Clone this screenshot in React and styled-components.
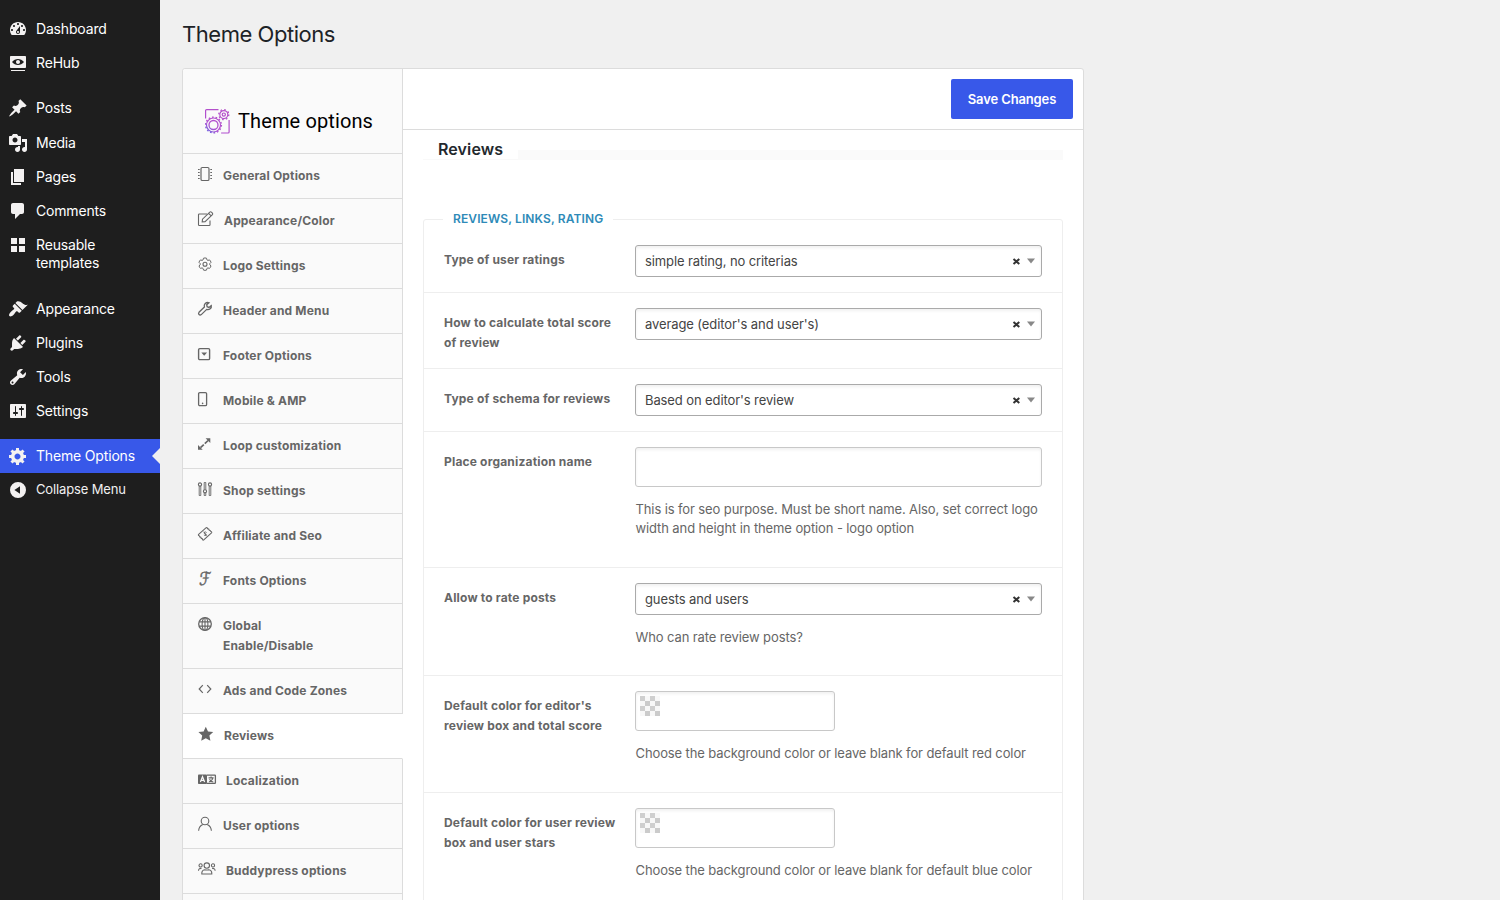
import React from 'react'
import styled, { createGlobalStyle, css } from 'styled-components'

const GlobalStyle = createGlobalStyle`
  *, *::before, *::after {
    box-sizing: border-box;
  }
  body {
    margin: 0;
    background: #f0f0f0;
    font-family: Inter, 'Liberation Sans', sans-serif;
    color: #3c434a;
  }
`

const Page = styled.div`
  display: flex;
  height: 100vh;
  overflow: hidden;
`

/* ---------- admin menu ---------- */

const AdminMenu = styled.nav`
  flex: 0 0 160px;
  padding-top: 12px;
  background: #1e1e1e;
`

const MenuGroup = styled.div`
  margin-bottom: 11px;
`

const MenuItem = styled.a`
  position: relative;
  display: flex;
  align-items: flex-start;
  padding: 8px 20px 8px 8px;
  font-size: 14px;
  line-height: 18.2px;
  letter-spacing: -0.17px;
  color: #fff;
  ${(p) => p.$active && css`
    height: 33.6px;
    background: #3858e9;
    &::after {
      content: '';
      position: absolute;
      right: 0;
      top: 9px;
      border: 8px solid transparent;
      border-right-color: #f0f0f0;
    }
  `}
  ${(p) => p.$collapse && css`
    font-size: 13px;
    line-height: 17px;
    letter-spacing: -0.14px;
    color: #f0f0f1;
  `}
`

const MenuIcon = styled.svg`
  flex: none;
  width: 20px;
  height: 20px;
  margin: -1px 8px -1px 0;
  fill: #f3f1f1;
`

const icons = {
  dashboard: 'M3.76 16h12.48c1.1-1.37 1.76-3.11 1.76-5 0-4.42-3.58-8-8-8s-8 3.58-8 8c0 1.89.66 3.63 1.76 5zM10 4c.55 0 1 .45 1 1s-.45 1-1 1-1-.45-1-1 .45-1 1-1zM6 6c.55 0 1 .45 1 1s-.45 1-1 1-1-.45-1-1 .45-1 1-1zm8 0c.55 0 1 .45 1 1s-.45 1-1 1-1-.45-1-1 .45-1 1-1zm-5.37 5.55L12 7v6c0 1.1-.9 2-2 2s-2-.9-2-2c0-.57.24-1.08.63-1.45zM4 10c.55 0 1 .45 1 1s-.45 1-1 1-1-.45-1-1 .45-1 1-1zm12 0c.55 0 1 .45 1 1s-.45 1-1 1-1-.45-1-1 .45-1 1-1zm-5 3c0-.55-.45-1-1-1s-1 .45-1 1 .45 1 1 1 1-.45 1-1z',
  rehub: 'M18 14V4c0-.55-.45-1-1-1H3c-.55 0-1 .45-1 1v10c0 .55.45 1 1 1h14c.55 0 1-.45 1-1zm-8-8c2.3 0 4.4 1.14 6 3-1.6 1.86-3.7 3-6 3s-4.4-1.14-6-3c1.6-1.86 3.7-3 6-3zm2 3c0-1.1-.9-2-2-2s-2 .9-2 2 .9 2 2 2 2-.9 2-2zM3 17h14v1H3z',
  posts: 'M10.44 3.02l1.82-1.82 6.36 6.35-1.83 1.82c-1.05-.68-2.48-.57-3.41.36l-.75.75c-.92.93-1.04 2.35-.35 3.41l-1.83 1.82-2.41-2.41-2.8 2.79c-.42.42-3.38 2.71-3.8 2.29s1.86-3.39 2.28-3.81l2.79-2.79L4.1 9.36l1.83-1.82c1.05.69 2.48.57 3.4-.36l.75-.75c.93-.92 1.05-2.35.36-3.41z',
  media: 'M13 11V4c0-.55-.45-1-1-1h-1.67L9 1H5L3.67 3H2c-.55 0-1 .45-1 1v7c0 .55.45 1 1 1h10c.55 0 1-.45 1-1zM7 4.5c1.38 0 2.5 1.12 2.5 2.5S8.38 9.5 7 9.5 4.5 8.38 4.5 7 5.62 4.5 7 4.5zM14 6h5v10.5c0 1.38-1.12 2.5-2.5 2.5S14 17.88 14 16.5s1.12-2.5 2.5-2.5c.17 0 .34.02.5.05V9h-3V6zm-4 8.05V13h2v3.5c0 1.38-1.12 2.5-2.5 2.5S7 17.88 7 16.5 8.12 14 9.5 14c.17 0 .34.02.5.05z',
  pages: 'M6 15V2h10v13H6zm-1 1h8v2H3V5h2v11z',
  comments: 'M5 2h9c1.1 0 2 .9 2 2v7c0 1.1-.9 2-2 2h-2l-5 5v-5H5c-1.1 0-2-.9-2-2V4c0-1.1.9-2 2-2z',
  blocks: 'M9 9V3H3v6h6zm8 0V3h-6v6h6zm-8 8v-6H3v6h6zm8 0v-6h-6v6h6z',
  appearance: 'M14.48 11.06L7.41 3.99l1.5-1.5c.5-.56 2.3-.47 3.51.32 1.21.8 1.43 1.28 2.91 2.1 1.18.64 2.45 1.26 4.45.85zm-.71.71L6.7 4.7 4.93 6.47c-.39.39-.39 1.02 0 1.41l1.06 1.06c.39.39.39 1.03 0 1.42-.6.6-1.43 1.11-2.21 1.69-.35.26-.7.53-1.01.84C1.43 14.23.4 16.08 1.4 17.07c.99 1 2.84-.03 4.18-1.36.31-.31.58-.66.85-1.02.57-.78 1.08-1.61 1.69-2.21.39-.39 1.02-.39 1.41 0l1.06 1.06c.39.39 1.02.39 1.41 0z',
  plugins: 'M13.11 4.36L9.87 7.6 8 5.73l3.24-3.24c.35-.34 1.05-.2 1.56.32.52.51.66 1.21.31 1.55zm-8 1.77l.91-1.12 9.01 9.01-1.19.84c-.71.71-2.63 1.16-3.82 1.16H6.14L4.9 17.26c-.59.59-1.54.59-2.12 0-.59-.58-.59-1.53 0-2.12l1.24-1.24v-3.88c0-1.13.4-3.19 1.09-3.89zm7.26 3.97l3.24-3.24c.34-.35 1.04-.21 1.55.31.52.51.66 1.21.31 1.55l-3.24 3.25z',
  tools: 'M16.68 9.77c-1.34 1.34-3.3 1.67-4.95.99l-5.41 6.52c-.99.99-2.59.99-3.58 0s-.99-2.59 0-3.57l6.52-5.42c-.68-1.65-.35-3.61.99-4.95 1.28-1.28 3.12-1.62 4.72-1.06l-2.89 2.89 2.82 2.82 2.86-2.87c.53 1.58.18 3.39-1.08 4.65zM3.81 16.21c.4.39 1.04.39 1.43 0 .4-.4.4-1.04 0-1.43-.39-.4-1.03-.4-1.43 0-.39.39-.39 1.03 0 1.43z',
  settings: 'M18 16V4c0-.55-.45-1-1-1H3c-.55 0-1 .45-1 1v12c0 .55.45 1 1 1h14c.55 0 1-.45 1-1zM8 11h1c.55 0 1 .45 1 1s-.45 1-1 1H8v1.5c0 .28-.22.5-.5.5s-.5-.22-.5-.5V13H6c-.55 0-1-.45-1-1s.45-1 1-1h1V5.5c0-.28.22-.5.5-.5s.5.22.5.5V11zm5-2h-1c-.55 0-1-.45-1-1s.45-1 1-1h1V5.5c0-.28.22-.5.5-.5s.5.22.5.5V7h1c.55 0 1 .45 1 1s-.45 1-1 1h-1v5.5c0 .28-.22.5-.5.5s-.5-.22-.5-.5V9z',
  generic: 'M18 12h-2.18c-.17.7-.44 1.35-.81 1.93l1.54 1.54-2.1 2.1-1.54-1.54c-.58.36-1.23.63-1.91.79V19H8v-2.18c-.68-.16-1.33-.43-1.91-.79l-1.54 1.54-2.12-2.12 1.54-1.54c-.36-.58-.63-1.23-.79-1.91H1V9.03h2.17c.16-.7.44-1.35.8-1.94L2.43 5.55l2.1-2.1 1.54 1.54c.58-.37 1.24-.64 1.93-.81V2h3v2.18c.68.16 1.33.43 1.91.79l1.54-1.54 2.12 2.12-1.54 1.54c.36.59.64 1.24.8 1.94H18V12zm-8.5 1.5c1.66 0 3-1.34 3-3s-1.34-3-3-3-3 1.34-3 3 1.34 3 3 3z',
  collapse: 'M10 2a8 8 0 1 0 0 16 8 8 0 0 0 0-16zM12 6.2v7.6L6.4 10z',
}

const menu = [
  [
    { icon: 'dashboard', label: 'Dashboard' },
    { icon: 'rehub', label: 'ReHub' },
  ],
  [
    { icon: 'posts', label: 'Posts' },
    { icon: 'media', label: 'Media' },
    { icon: 'pages', label: 'Pages' },
    { icon: 'comments', label: 'Comments' },
    { icon: 'blocks', label: 'Reusable templates' },
  ],
  [
    { icon: 'appearance', label: 'Appearance' },
    { icon: 'plugins', label: 'Plugins' },
    { icon: 'tools', label: 'Tools' },
    { icon: 'settings', label: 'Settings' },
  ],
  [
    { icon: 'generic', label: 'Theme Options', active: true },
    { icon: 'collapse', label: 'Collapse Menu', collapse: true },
  ],
]

/* ---------- page and panel ---------- */

const Main = styled.main`
  padding: 20px 0 0 22px;
`

const PageTitle = styled.h1`
  margin: 0 0 19px;
  font-size: 22px;
  font-weight: 400;
  line-height: 29px;
  letter-spacing: -0.46px;
  color: #1d2327;
`

const Panel = styled.div`
  display: flex;
  align-items: stretch;
  width: 902px;
  height: 1200px;
  border: 1px solid #dcdcdc;
  border-radius: 3px;
  background: #fff;
`

const PanelNav = styled.div`
  flex: none;
  width: 220px;
`

const Brand = styled.div`
  display: flex;
  align-items: flex-end;
  height: 85px;
  padding: 0 0 19px 22px;
  border-right: 1px solid #dcdcdc;
  border-bottom: 1px solid #dcdcdc;
  border-top-left-radius: 3px;
  background: #fafafa;
`

const BrandName = styled.span`
  margin-left: 8px;
  font-family: Roboto, sans-serif;
  font-size: 20px;
  line-height: 26px;
  letter-spacing: 0.12px;
  color: #000;
`

const NavItem = styled.a`
  display: flex;
  align-items: flex-start;
  min-height: 45px;
  padding: 12px 40px 12px 15px;
  border-right: 1px solid #dcdcdc;
  border-bottom: 1px solid #dcdcdc;
  background: #fafafa;
  font-size: 12px;
  font-weight: 700;
  line-height: 20px;
  letter-spacing: 0.17px;
  color: #666;
  ${(p) => p.$active && css`
    background: #fff;
    border-right-color: #fff;
  `}
`

const NavText = styled.span`
  max-width: 130px;
  ${(p) => p.$wrap && css`
    max-width: 110px;
  `}
`

const NavIcon = styled.svg`
  flex: none;
  width: ${(p) => p.$w}px;
  height: 16px;
  margin-right: 11px;
  overflow: visible;
  fill: none;
  stroke: #666;
  stroke-width: 1.1;
`

const NavLetter = styled.span`
  flex: none;
  width: 14px;
  height: 16px;
  margin-right: 11px;
  font-family: 'DejaVu Sans', sans-serif;
  font-size: 18px;
  font-weight: 400;
  line-height: 16px;
  -webkit-text-stroke: 0.5px #666;
  transform: scaleX(0.82) skewX(-4deg);
`

const sections = [
  {
    label: 'General Options',
    art: <>
      <rect x="3" y="1.5" width="8" height="13" rx="1.3" strokeWidth="1.2" />
      <path d="M0 3.5h1.7M0 6.5h1.7M0 9.5h1.7M0 12.5h1.7M12.3 3.5H14M12.3 6.5H14M12.3 9.5H14M12.3 12.5H14" />
    </>,
  },
  {
    label: 'Appearance/Color', w: 15,
    art: <>
      <path d="M9 3H1.3Q.5 3 .5 3.8v9.9q0 .8.8.8h9.9q.8 0 .8-.8V9.5" />
      <path d="M4.2 10.9l.3-2.7 7.3-7.1q.8-.7 1.6 0l1 1q.7.8 0 1.6l-7.3 7-2.9.2zM10.6 2.3l2.6 2.6" />
    </>,
  },
  {
    label: 'Logo Settings',
    art: <>
      <path d="M5.5 2.2Q7 1.7 8.5 2.2l.4 1.6 1 .6 1.6-.5q1.1 1 1.5 2.5L11.8 7.6v1.2l1.2 1.1q-.4 1.5-1.5 2.5l-1.6-.5-1 .6-.4 1.6q-1.5.5-3 0l-.4-1.6-1-.6-1.6.5q-1.1-1-1.5-2.5l1.2-1.1V7.6L1 6.4q.4-1.5 1.5-2.5l1.6.5 1-.6z" strokeWidth="1" />
      <circle cx="7" cy="8.2" r="2" />
    </>,
  },
  {
    label: 'Header and Menu',
    art: <path d="M13.3 4.6l-2.3 1.8-1.9-.7-.4-2L11 1.8Q8.9 1 7.2 2.5 5.8 4 6.4 6L1 11.3q-.9 1.2 0 2.3 1.1 1 2.3 0L8.7 8.4q2 .5 3.5-.7 1.5-1.3 1.1-3.1z" strokeWidth="1.3" />,
  },
  {
    label: 'Footer Options',
    art: <>
      <rect x=".6" y="2.6" width="11" height="11" rx="1.2" strokeWidth="1.4" />
      <path d="M3.3 6.5h5.8L6.2 9.7z" fill="#666" stroke="none" />
    </>,
  },
  {
    label: 'Mobile & AMP',
    art: <>
      <rect x=".6" y="1.6" width="8" height="13" rx="1.2" strokeWidth="1.3" />
      <circle cx="4.6" cy="12.4" r=".8" fill="#666" stroke="none" />
    </>,
  },
  {
    label: 'Loop customization',
    art: <>
      <path d="M2.5 11.7l3.3-3.1M6.8 7.6l3.3-3.1" strokeWidth="1.7" />
      <path d="M7.6 2.2h4.7v4.7zM0 9.1v4.7h4.7z" fill="#666" stroke="none" />
    </>,
  },
  {
    label: 'Shop settings',
    art: <>
      <circle cx="2" cy="3.5" r="1.6" />
      <circle cx="7" cy="10.3" r="1.6" />
      <circle cx="12" cy="3.5" r="1.6" />
      <path d="M1.2 5v9.5h1.6V5M6.2 8.8V1.5h1.6v7.3M6.2 11.7v2.8h1.6v-2.8M11.2 5v9.5h1.6V5" strokeWidth=".9" />
    </>,
  },
  {
    label: 'Affiliate and Seo',
    art: <>
      <path d="M.6 8.3L8.2 1.7q.6-.4 1 .1.2 1.2 1.5 1.3.2 1.3 1.5 1.5.3 1 1.3 1.2.5.5 0 1L5.8 13.9q-.6.5-1.1-.1-.1-1.2-1.4-1.4-.2-1.3-1.5-1.5-.2-1.2-1.2-1.4-.5-.6 0-1.2z" />
      <path d="M8.6 6.5Q7.2 5.4 6.2 6.4q-.3 1.2 1 1.3 1.4.2.9 1.4-1 .9-2.2-.2M5.8 5.7l2.7 4.4" strokeWidth=".9" />
    </>,
  },
  { label: 'Fonts Options', letter: 'ℱ' },
  {
    label: 'Global Enable/Disable', wrap: true,
    art: <>
      <circle cx="7" cy="8" r="6.3" strokeWidth="1.3" />
      <ellipse cx="7" cy="8" rx="2.9" ry="6.3" />
      <path d="M1.2 5.9h11.6M1.2 10.1h11.6M7 1.7v12.6" />
    </>,
  },
  {
    label: 'Ads and Code Zones',
    art: <path d="M4.8 4.2L1.2 8l3.6 3.8M9.2 4.2L12.8 8l-3.6 3.8" strokeWidth="1.2" />,
  },
  {
    label: 'Reviews', w: 15, active: true,
    art: <path d="M7.8.7l2.2 4.7 5.2.7-3.8 3.5 1 5.2-4.6-2.5-4.6 2.5 1-5.2L.4 6.1l5.2-.7z" fill="#666" stroke="none" />,
  },
  {
    label: 'Localization', w: 17,
    art: <>
      <rect x="0" y="3.5" width="9" height="9.5" rx=".8" fill="#666" stroke="none" />
      <path d="M2.4 11l2.1-5.3L6.6 11M3.2 9.3h2.6" stroke="#fafafa" strokeWidth="1.2" />
      <path d="M9 4.1h7.8q.6 0 .6.6v7.1q0 .6-.6.6H9" strokeWidth="1.3" />
      <path d="M10.6 6.9h5M13.1 5.5v1.4M14.8 7q-.5 2.7-3.8 4M11.5 8.3q1.2 2.3 3.8 2.7" />
    </>,
  },
  {
    label: 'User options',
    art: <>
      <circle cx="7" cy="5" r="3.8" />
      <path d="M.6 14.8Q1 10 4.8 8.5M13.4 14.8Q13 10 9.2 8.5" />
    </>,
  },
  {
    label: 'Buddypress options', w: 17,
    art: <>
      <circle cx="2.6" cy="4.4" r="1.6" />
      <circle cx="15" cy="4.4" r="1.6" />
      <circle cx="8.8" cy="4.6" r="2.7" />
      <path d="M3.8 13q-.2-4 3-4.3 2 .7 4 0 3.2.3 3 4.3zM.5 9.8q0-2.6 3-2.4M17.1 9.8q0-2.6-3-2.4" />
    </>,
  },
]

const Content = styled.div`
  flex: 1;
  min-width: 0;
`

const Toolbar = styled.div`
  display: flex;
  justify-content: flex-end;
  height: 61px;
  padding: 10px;
  border-bottom: 1px solid #dcdcdc;
`

const SaveButton = styled.button`
  width: 122px;
  height: 40px;
  padding: 0;
  border: 0;
  border-radius: 2px;
  background: #3858e9;
  font: 600 13px/40px Inter, sans-serif;
  letter-spacing: -0.13px;
  color: #fff;
`

const SectionHead = styled.div`
  display: flex;
  align-items: flex-end;
  height: 30px;
  margin: 0 20px;
`

const SectionTitle = styled.h2`
  width: 95px;
  height: 30px;
  margin: 0;
  padding-left: 15px;
  border-bottom: 1px solid #f9f9f9;
  font-size: 16px;
  font-weight: 600;
  line-height: 39px;
  letter-spacing: 0.1px;
  color: #23282d;
`

const SectionBar = styled.div`
  flex: 1;
  height: 10px;
  background: #fafafa;
`

const FieldGroup = styled.fieldset`
  min-width: 0;
  margin: 49px 20px 0;
  padding: 1px 0 0;
  border: 1px solid #eee;
  border-radius: 3px;
`

const Legend = styled.legend`
  margin-left: 19px;
  padding: 0 10px;
  font-size: 12px;
  font-weight: 600;
  line-height: 20px;
  letter-spacing: 0.11px;
  text-transform: uppercase;
  color: #2e8ab8;
`

const FieldRow = styled.div`
  display: flex;
  padding: 15px 20px ${(p) => (p.$input ? 16 : 15)}px;
  border-bottom: 1px solid #eee;
`

const FieldLabel = styled.label`
  flex: 0 0 191px;
  padding: 5px 10px 0 0;
  font-size: 12px;
  font-weight: 700;
  line-height: 20px;
  letter-spacing: 0.18px;
  color: #666;
`

const FieldBody = styled.div`
  flex: 0 0 407px;
`

const Hint = styled.p`
  margin: 13px 0;
  padding-left: 0.5px;
  font-size: 13px;
  line-height: 19px;
  letter-spacing: -0.11px;
  color: #666;
`

const SelectBox = styled.div`
  display: flex;
  align-items: center;
  height: 32px;
  padding: 0 5px 0 9px;
  border: 1px solid #aaa;
  border-radius: 3px;
  background: #fff;
  box-shadow: inset 0 2px 3px rgba(0, 0, 0, 0.06);
  font-size: 13px;
  letter-spacing: -0.1px;
  color: #444;
`

const SelectValue = styled.span`
  flex: 1;
`

const SelectMark = styled.svg`
  width: 24px;
  height: 10px;
`

const TextInput = styled.div`
  display: flex;
  width: ${(p) => p.$width || 407}px;
  height: 40px;
  padding: 4px;
  border: 1px solid #c8c8c8;
  border-radius: 3px;
  background: #fff;
  box-shadow: inset 0 2px 3px rgba(0, 0, 0, 0.06);
`

const Swatch = styled.span`
  width: 20px;
  height: 20px;
  background: conic-gradient(#f8f8f8 25%, #cbcbcb 0 50%, #f8f8f8 0 75%, #cfcfcf 0) 0 0 / 10px 10px;
`

const fields = [
  { label: 'Type of user ratings', select: 'simple rating, no criterias' },
  { label: 'How to calculate total score of review', select: "average (editor's and user's)" },
  { label: 'Type of schema for reviews', select: "Based on editor's review" },
  {
    label: 'Place organization name', text: true,
    hint: 'This is for seo purpose. Must be short name. Also, set correct logo width and height in theme option - logo option',
  },
  { label: 'Allow to rate posts', select: 'guests and users', hint: 'Who can rate review posts?' },
  {
    label: "Default color for editor's review box and total score", color: true,
    hint: 'Choose the background color or leave blank for default red color',
  },
  {
    label: 'Default color for user review box and user stars', color: true,
    hint: 'Choose the background color or leave blank for default blue color',
  },
]

const BrandMark = () => (
  <svg width="25" height="25" viewBox="0 0 25 25" fill="none" stroke="url(#brand)" strokeWidth="1.2">
    <defs>
      <linearGradient id="brand" gradientUnits="userSpaceOnUse" x1="4" y1="24" x2="22" y2="2">
        <stop offset="0" stopColor="#6f62e0" />
        <stop offset="0.25" stopColor="#b04fd0" />
        <stop offset="1" stopColor="#b550c8" />
      </linearGradient>
    </defs>
    <path d="M.6 9.5V1.6q0-1 1-1H13.5M24.1 11v12q0 1-1 1h-7" />
    <circle cx="8.5" cy="16" r="4.5" strokeWidth="1.3" />
    <circle cx="8.5" cy="16" r="7" />
    <circle cx="8.5" cy="16" r="7.9" strokeDasharray="1.7 1.85" strokeWidth="1.4" />
    <circle cx="18.8" cy="5.6" r="1.6" />
    <circle cx="18.8" cy="5.6" r="4" />
    <circle cx="18.8" cy="5.6" r="5" strokeDasharray="1.6 2.3" strokeWidth="1.3" />
  </svg>
)

const Select = ({ value }) => (
  <SelectBox>
    <SelectValue>{value}</SelectValue>
    <SelectMark viewBox="0 0 24 10">
      <path d="M1.5 3l5.8 5M7.3 3l-5.8 5" stroke="#333" strokeWidth="2" />
      <path d="M15 2.5h8l-4 5z" fill="#888" />
    </SelectMark>
  </SelectBox>
)

const Field = ({ field }) => (
  <FieldRow $input={field.text || field.color}>
    <FieldLabel>{field.label}</FieldLabel>
    <FieldBody>
      {field.select && <Select value={field.select} />}
      {field.text && <TextInput />}
      {field.color && <TextInput $width={200}><Swatch /></TextInput>}
      {field.hint && <Hint>{field.hint}</Hint>}
    </FieldBody>
  </FieldRow>
)

export default function App() {
  return (
    <Page>
      <GlobalStyle />
      <AdminMenu>
        {menu.map((group, i) => (
          <MenuGroup key={i}>
            {group.map((item) => (
              <MenuItem key={item.label} $active={item.active} $collapse={item.collapse}>
                <MenuIcon viewBox="0 0 20 20"><path fillRule="evenodd" d={icons[item.icon]} /></MenuIcon>
                {item.label}
              </MenuItem>
            ))}
          </MenuGroup>
        ))}
      </AdminMenu>
      <Main>
        <PageTitle>Theme Options</PageTitle>
        <Panel>
          <PanelNav>
            <Brand>
              <BrandMark />
              <BrandName>Theme options</BrandName>
            </Brand>
            {sections.map((s) => (
              <NavItem key={s.label} $active={s.active}>
                {s.letter
                  ? <NavLetter>{s.letter}</NavLetter>
                  : <NavIcon $w={s.w || 14}>{s.art}</NavIcon>}
                <NavText $wrap={s.wrap}>{s.label}</NavText>
              </NavItem>
            ))}
            <NavItem />
          </PanelNav>
          <Content>
            <Toolbar>
              <SaveButton>Save Changes</SaveButton>
            </Toolbar>
            <SectionHead>
              <SectionTitle>Reviews</SectionTitle>
              <SectionBar />
            </SectionHead>
            <FieldGroup>
              <Legend>Reviews, Links, Rating</Legend>
              {fields.map((f) => <Field key={f.label} field={f} />)}
            </FieldGroup>
          </Content>
        </Panel>
      </Main>
    </Page>
  )
}
